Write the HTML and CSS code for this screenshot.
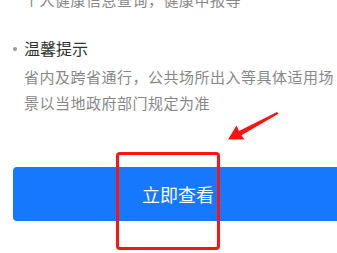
FILE: index.html
```html
<!DOCTYPE html>
<html lang="zh-CN">
<head>
    <meta charset="UTF-8">
    <meta name="viewport" content="width=device-width, initial-scale=1.0">
    <title>健康码</title>
    <link rel="stylesheet" href="styles.css">
</head>
<body>

<div id="page">
    <div class="item">
        <p class="desc">个人健康信息查询，健康申报等</p>
    </div>

    <div class="item">
        <h3><span class="dot"></span>温馨提示</h3>
        <p class="desc">省内及跨省通行，公共场所出入等具体适用场景以当地政府部门规定为准</p>
    </div>

    <button class="check-btn">立即查看</button>

    <!-- 标注 -->
    <svg class="mark-arrow" width="60" height="40" viewBox="220 105 60 40">
        <polygon points="277,112 278.5,113.8 241.5,135.2 244.5,139.5 228,139.5 236.5,125.5 239,131" fill="#fe1313"/>
    </svg>
    <div class="mark-box"></div>
</div>

</body>
</html>
```

FILE: styles.css
```css
body {
    font-family: "Noto Sans CJK SC", "Noto Sans", sans-serif;
    background-color: #fff;
    margin: 0;
}
#page {
    position: relative;
    margin-top: -13px;
    padding-left: 24px;
    min-height: 266px;
    overflow: hidden;
}
.item {
    margin-bottom: 22.5px;
}
h3 {
    position: relative;
    margin: 0 0 4.5px;
    font-size: 16px;
    font-weight: normal;
    line-height: 24px;
    color: #333;
}
.dot {
    position: absolute;
    left: -11px;
    top: 11px;
    width: 4px;
    height: 4px;
    border-radius: 50%;
    background: #999;
}
.desc {
    margin: 0;
    font-size: 15px;
    letter-spacing: 0.5px;
    line-height: 26px;
    color: #888;
}
.check-btn {
    display: block;
    width: 330px;
    height: 54px;
    margin: 50.5px 0 0 -11px; /* 和上面的 margin 合并 */
    border: none;
    border-radius: 4px;
    background-color: #1677ff;
    color: #fff;
    font-family: inherit;
    font-size: 18px;
    padding: 0;
}
.mark-arrow {
    position: absolute;
    left: 220px;
    top: 118px;
}
.mark-box {
    position: absolute;
    left: 116px;
    top: 165px;
    width: 98px;
    height: 92px;
    border: 3px solid #fe1313;
    border-radius: 4px;
}
```
